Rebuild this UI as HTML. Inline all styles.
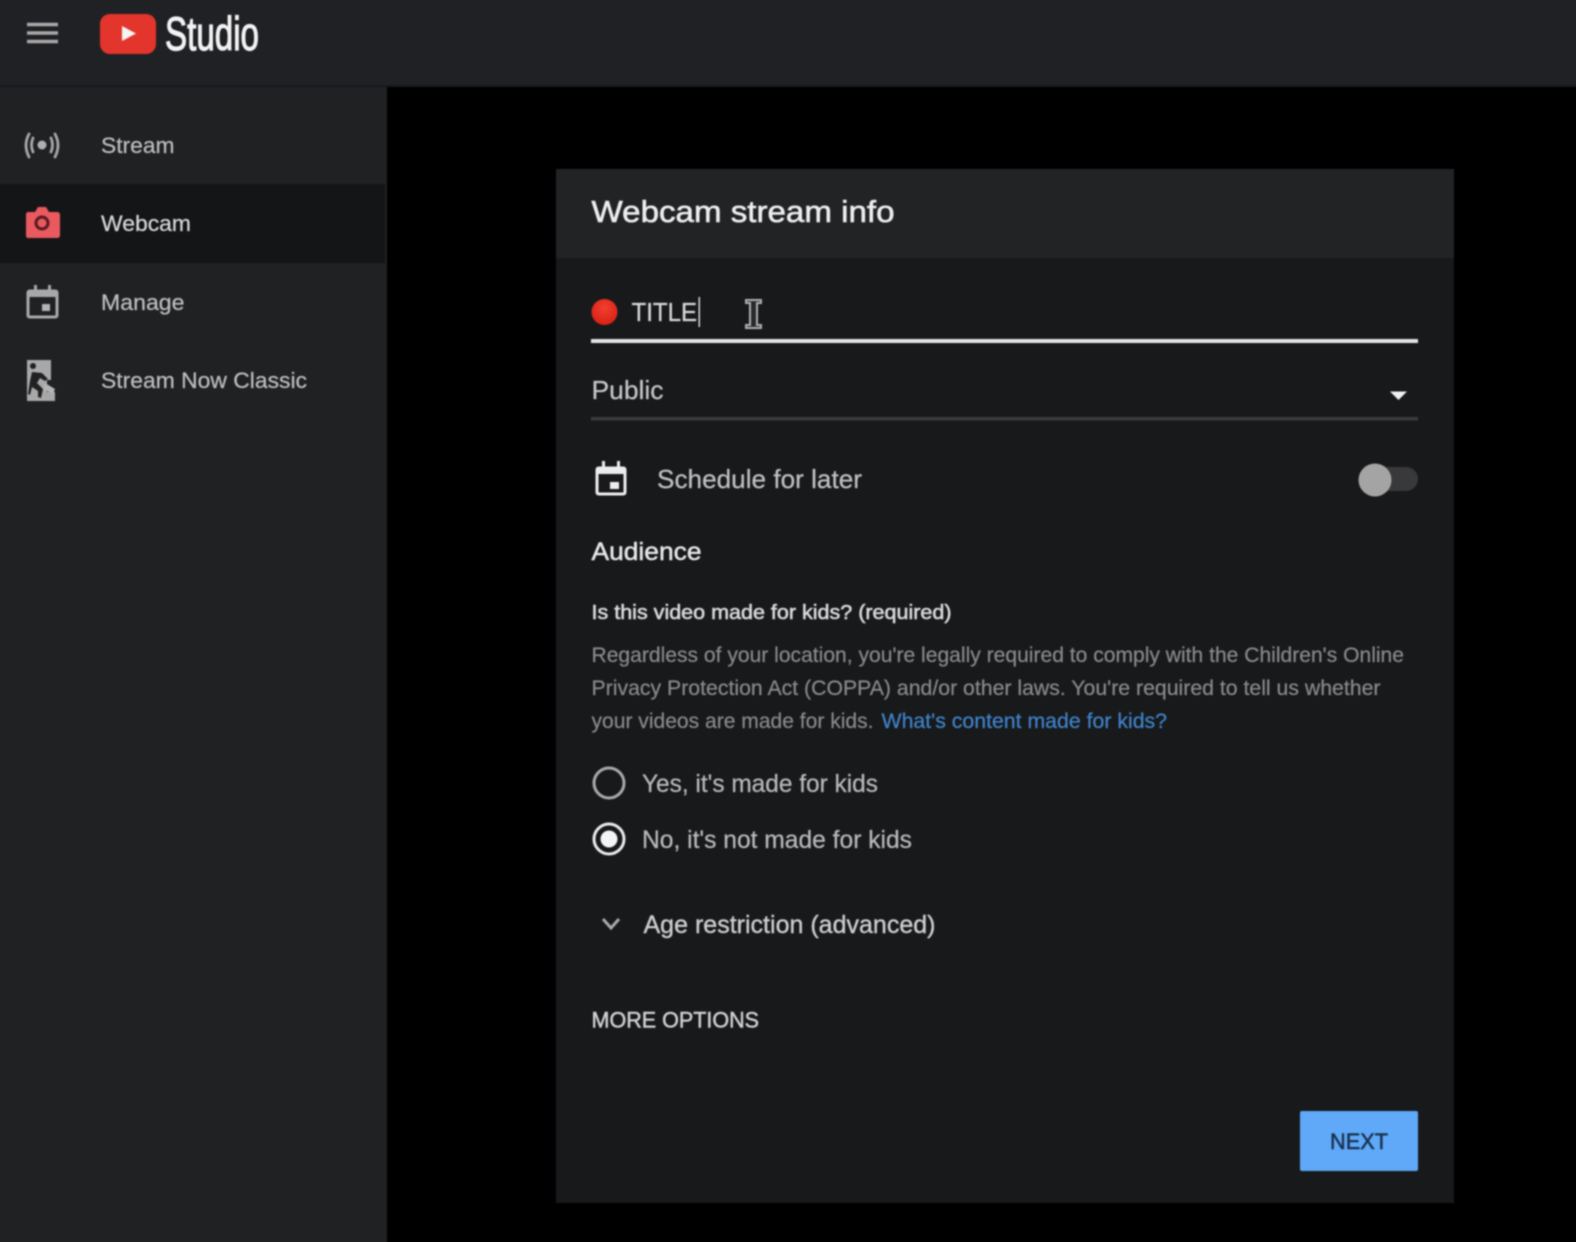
<!DOCTYPE html>
<html><head><meta charset="utf-8"><title>Studio</title>
<style>
html,body{margin:0;padding:0;background:#000;width:1576px;height:1242px;overflow:hidden;position:relative}
svg{display:block;position:absolute;left:-10px;top:-10px;filter:blur(.7px)}
text{font-family:"Liberation Sans",sans-serif;white-space:pre}
</style></head><body>
<svg width="1596" height="1262" viewBox="-10 -10 1596 1262" xmlns="http://www.w3.org/2000/svg">
<rect x="-10" y="-10" width="1596" height="1262" fill="#000"/>
<rect x="-10" y="-10" width="1596" height="95" fill="#202124"/>
<rect x="-10" y="85" width="1596" height="2" fill="#19191b"/>
<rect x="-10" y="87" width="397" height="1165" fill="#202123"/>
<rect x="-10" y="184" width="395" height="79" fill="#141517"/>

<!-- hamburger -->
<g stroke="#a8a8a8" stroke-width="3.500"><path d="M27 24.500H58M27 33H58M27 41.500H58"/></g>
<!-- logo -->
<rect x="100" y="14" width="56" height="40" rx="10" fill="#e3352b"/>
<path d="M122 26L136 33.500L122 41Z" fill="#f4f4f4"/>
<text x="165" y="50" font-size="47" fill="#f2f2f2" stroke="#f2f2f2" stroke-width="1.200" textLength="94" lengthAdjust="spacingAndGlyphs">Studio</text>

<!-- sidebar icons -->
<g fill="none" stroke="#a6a6a6" stroke-width="2.800" stroke-linecap="round">
<path d="M33 138Q30 145 33 152M51 138Q54 145 51 152"/>
<path d="M29 134Q23 145 29 157M55 134Q61 145 55 157"/>
</g>
<circle cx="42" cy="145" r="4.500" fill="#b0b0b0"/>
<path d="M28 212H35L38 207H46L49 212H57Q60 212 60 215V235Q60 238 57 238H28Q26 238 26 235V215Q26 212 28 212Z" fill="#e85a5f"/>
<circle cx="42" cy="223" r="6" fill="none" stroke="#5a1a20" stroke-width="3"/>
<g>
<path d="M30 291H55Q57 291 57 293V315Q57 317 55 317H30Q28 317 28 315V293Q28 291 30 291Z" fill="none" stroke="#a8a8a8" stroke-width="3"/>
<rect x="28" y="291" width="29" height="6" fill="#a8a8a8"/>
<rect x="34" y="285" width="3" height="6" fill="#a8a8a8"/><rect x="48" y="285" width="3" height="6" fill="#a8a8a8"/>
<rect x="42" y="304" width="8" height="7" fill="#b4b4b4"/>
</g>
<g>
<path d="M27 360H51V380H47V392H55V401H27Z" fill="#a8a8a8"/>
<circle cx="33" cy="366" r="3" fill="#202123"/>
<path d="M32 372L42 373L48 379L45 381L40 378L37 383L43 389L41 398L38 397L38 391L32 387L30 395L28 394L30 381Z" fill="#202123"/>
<path d="M45 383L55 389L53 394L43 389Z" fill="#b4b4b4"/>
</g>

<!-- sidebar text -->
<g font-size="22" fill="#bdbdbd" stroke="#bdbdbd" stroke-width=".25">
<text x="101" y="153" textLength="73.500" lengthAdjust="spacingAndGlyphs">Stream</text>
<text x="101" y="231" textLength="90" lengthAdjust="spacingAndGlyphs" fill="#d6d6d6" stroke="#d6d6d6">Webcam</text>
<text x="101" y="310" textLength="83.500" lengthAdjust="spacingAndGlyphs">Manage</text>
<text x="101" y="388" textLength="206" lengthAdjust="spacingAndGlyphs">Stream Now Classic</text>
</g>

<!-- card -->
<rect x="556" y="169" width="898" height="1034" fill="#18191b"/>
<rect x="556" y="169" width="898" height="89" fill="#222325"/>
<text x="591.500" y="222" font-size="31" fill="#ededed" stroke="#ededed" stroke-width=".6" textLength="303" lengthAdjust="spacingAndGlyphs">Webcam stream info</text>

<!-- title -->
<defs><radialGradient id="d" cx=".5" cy=".35" r=".7"><stop offset="0" stop-color="#f0402e"/><stop offset="1" stop-color="#d81e14"/></radialGradient></defs>
<circle cx="604.500" cy="312" r="13" fill="url(#d)"/>
<text x="631.500" y="321" font-size="26" fill="#d8d8d8" stroke="#d8d8d8" stroke-width=".3" textLength="65.500" lengthAdjust="spacingAndGlyphs">TITLE</text>
<rect x="698.500" y="297" width="1.500" height="30" fill="#d8d8d8"/>
<path d="M746 300H761V303H757V325H761V328H746V325H750V303H746Z" fill="#2a2a2c" stroke="#b0b0b0" stroke-width="2"/>
<rect x="591" y="339" width="827" height="4" fill="#e4e4e4"/>

<!-- public -->
<text x="591.500" y="399" font-size="26" fill="#c6c6c6" stroke="#c6c6c6" stroke-width=".25" textLength="72" lengthAdjust="spacingAndGlyphs">Public</text>
<path d="M1390 391.500H1407L1398.500 400Z" fill="#f0f0f0"/>
<rect x="591" y="417" width="827" height="3.500" fill="#3b3b3d"/>

<!-- schedule -->
<path d="M599 468H623Q625 468 625 470V492Q625 494 623 494H599Q597 494 597 492V470Q597 468 599 468Z" fill="none" stroke="#ececec" stroke-width="3"/>
<rect x="597" y="468" width="28" height="6" fill="#ececec"/>
<rect x="602" y="461" width="3" height="7" fill="#ececec"/><rect x="617" y="461" width="3" height="7" fill="#ececec"/>
<rect x="610" y="482" width="9" height="7" fill="#ececec"/>
<text x="657" y="488" font-size="26" fill="#c0c0c0" stroke="#c0c0c0" stroke-width=".25" textLength="205" lengthAdjust="spacingAndGlyphs">Schedule for later</text>
<rect x="1372" y="467" width="46" height="24" rx="12" fill="#39393b"/>
<circle cx="1375" cy="480" r="16.500" fill="#a4a4a4"/>

<!-- audience -->
<text x="591.500" y="560" font-size="25" fill="#e6e6e6" stroke="#e6e6e6" stroke-width=".5" textLength="110" lengthAdjust="spacingAndGlyphs">Audience</text>
<text x="591.500" y="619" font-size="20.500" fill="#d8d8d8" stroke="#d8d8d8" stroke-width=".6" textLength="360" lengthAdjust="spacingAndGlyphs">Is this video made for kids? (required)</text>
<g font-size="21" fill="#8a8a8a" stroke="#8a8a8a" stroke-width=".2">
<text x="591.500" y="662" textLength="812.500" lengthAdjust="spacingAndGlyphs">Regardless of your location, you're legally required to comply with the Children's Online</text>
<text x="591.500" y="695" textLength="789" lengthAdjust="spacingAndGlyphs">Privacy Protection Act (COPPA) and/or other laws. You're required to tell us whether</text>
<text x="591.500" y="728" textLength="282" lengthAdjust="spacingAndGlyphs">your videos are made for kids.</text>
<text x="881.500" y="728" fill="#3f84cc" stroke="#3f84cc" textLength="285.500" lengthAdjust="spacingAndGlyphs">What's content made for kids?</text>
</g>

<!-- radios -->
<circle cx="609" cy="783" r="15" fill="none" stroke="#a8a8a8" stroke-width="3"/>
<text x="642" y="792" font-size="25" fill="#b8b8b8" stroke="#b8b8b8" stroke-width=".25" textLength="236" lengthAdjust="spacingAndGlyphs">Yes, it's made for kids</text>
<circle cx="609" cy="839" r="15" fill="none" stroke="#e8e8e8" stroke-width="3"/>
<circle cx="609" cy="839" r="8.500" fill="#f4f4f4"/>
<text x="642" y="848" font-size="25" fill="#b8b8b8" stroke="#b8b8b8" stroke-width=".25" textLength="270" lengthAdjust="spacingAndGlyphs">No, it's not made for kids</text>

<!-- age -->
<path d="M603 919L611 928L619 919" fill="none" stroke="#a8a8a8" stroke-width="3"/>
<text x="643.500" y="933" font-size="25" fill="#cccccc" stroke="#cccccc" stroke-width=".4" textLength="292" lengthAdjust="spacingAndGlyphs">Age restriction (advanced)</text>

<text x="591.500" y="1027.500" font-size="22" fill="#cfcfcf" stroke="#cfcfcf" stroke-width=".5" textLength="167.500" lengthAdjust="spacingAndGlyphs">MORE OPTIONS</text>

<!-- next -->
<rect x="1300" y="1111" width="118" height="60" rx="2" fill="#60a8f8"/>
<text x="1330" y="1149" font-size="22" fill="#17324f" stroke="#17324f" stroke-width=".5" textLength="58" lengthAdjust="spacingAndGlyphs">NEXT</text>
</svg>
</body></html>
